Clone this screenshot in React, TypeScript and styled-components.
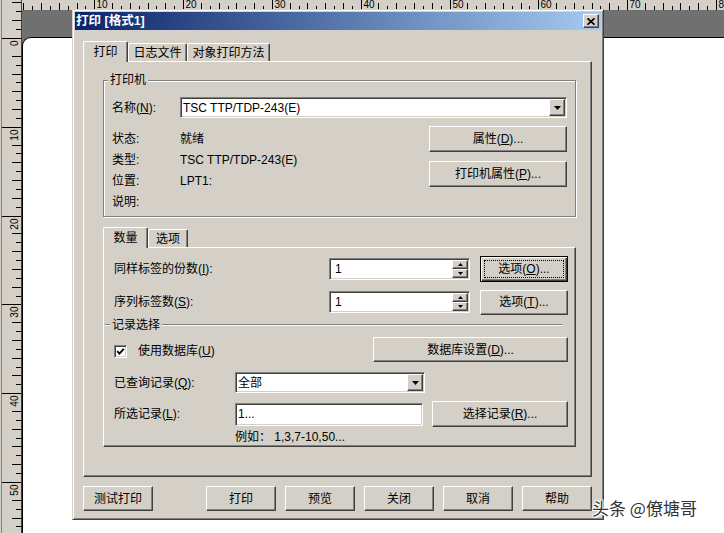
import React from "react";
import styled, { createGlobalStyle, css } from "styled-components";

const FACE = "#d4d0c8";
const HL = "#ffffff";
const SH = "#808080";
const DK = "#404040";
const FONT = `"Liberation Sans", "Noto Sans CJK SC", sans-serif`;
const UNIT = 8.88;

const GlobalStyle = createGlobalStyle`
  html, body { margin: 0; padding: 0; background: #fff; }
  body { font-family: ${FONT}; font-size: 12px; color: #000; }
  #root { width: 724px; height: 533px; overflow: hidden; }
  * { box-sizing: border-box; }
`;

const Workspace = styled.div`
  position: relative;
  width: 724px;
  height: 533px;
  display: grid;
  grid-template-columns: 22px 1fr;
  grid-template-rows: 10px 1fr;
  overflow: hidden;
  background: #fff;
`;

const RulerSvg = styled.svg`
  display: block;
  background: ${FACE};
  line { stroke: #000; stroke-width: 1; shape-rendering: crispEdges; }
  text { font-family: "Liberation Sans", sans-serif; font-size: 10px; fill: #000; }
`;

const VRulerSvg = styled(RulerSvg)`
  grid-row: 1 / 3;
  grid-column: 1;
`;

const HRulerSvg = styled(RulerSvg)`
  grid-row: 1;
  grid-column: 2;
`;

const Canvas = styled.div`
  grid-row: 2;
  grid-column: 2;
  background: #707070;
  padding-top: 27px;
  display: flex;
  flex-direction: column;
`;

const Page = styled.div`
  flex: 1;
  background: #fff;
  border-top: 1px solid #000;
  border-left: 1px solid #000;
  border-top-left-radius: 9px;
`;

function HRuler() {
  const items: React.ReactNode[] = [];
  for (let k = 0; k <= 82; k++) {
    const x = 5.5 + UNIT * k - 22;
    if (x < 0 || x > 702) continue;
    const px = Math.round(x) + 0.5;
    if (k % 10 === 0) {
      items.push(<line key={`l${k}`} x1={px} x2={px} y1={0} y2={10} />);
      items.push(
        <text key={`t${k}`} x={px + 2} y={7.5}>
          {k}
        </text>
      );
    } else if (k % 10 !== 1) {
      items.push(<line key={`l${k}`} x1={px} x2={px} y1={k % 2 === 0 ? 3 : 6} y2={10} />);
    }
  }
  return (
    <HRulerSvg width={702} height={10} viewBox="0 0 702 10">
      {items}
    </HRulerSvg>
  );
}

function VRuler() {
  const items: React.ReactNode[] = [];
  for (let k = -4; k <= 56; k++) {
    const y = 38 + UNIT * k;
    if (y < 0 || y > 533) continue;
    const py = Math.round(y) + 0.5;
    if (k % 10 === 0) {
      items.push(<line key={`l${k}`} x1={2} x2={21} y1={py} y2={py} />);
      items.push(
        <text key={`t${k}`} textAnchor="end" transform={`translate(17.5 ${py + 2}) rotate(-90)`}>
          {Math.abs(k)}
        </text>
      );
    } else if (((k % 10) + 10) % 10 !== 1) {
      items.push(<line key={`l${k}`} x1={Math.abs(k) % 2 === 0 ? 12 : 16} x2={21} y1={py} y2={py} />);
    }
  }
  return (
    <VRulerSvg width={22} height={533} viewBox="0 0 22 533">
      <line x1={1.5} x2={1.5} y1={0} y2={533} style={{ stroke: SH }} />
      <line x1={21.5} x2={21.5} y1={0} y2={533} style={{ stroke: DK }} />
      {items}
    </VRulerSvg>
  );
}

/* ---------- dialog ---------- */

const Dialog = styled.div`
  position: absolute;
  left: 72px;
  top: 9px;
  width: 532px;
  background: ${FACE};
  border: 1px solid;
  border-color: ${FACE} ${DK} ${DK} ${FACE};
  box-shadow: inset 1px 1px ${HL}, inset -1px -1px ${SH};
  padding: 2px;
  display: flex;
  flex-direction: column;
`;

const TitleBar = styled.div`
  height: 18px;
  display: flex;
  align-items: center;
  justify-content: space-between;
  padding: 0 2px 0 1px;
  background: linear-gradient(to right, #0a246a, #a6caf0);
`;

const Title = styled.span`
  color: #fff;
  font-weight: bold;
  font-size: 12.5px;
  line-height: 18px;
`;

const raised = css`
  background: ${FACE};
  border: 1px solid;
  border-color: ${HL} ${DK} ${DK} ${HL};
  box-shadow: inset -1px -1px ${SH};
`;

const CloseButton = styled.button`
  ${raised};
  width: 16px;
  height: 14px;
  padding: 0;
  display: flex;
  align-items: center;
  justify-content: center;
`;

const Body = styled.div`
  padding: 11px 9px 6px 8px;
  display: flex;
  flex-direction: column;
`;

const TabStrip = styled.div<{ $top?: number }>`
  display: flex;
  align-items: flex-end;
  height: 20px;
  margin-top: ${(p) => p.$top ?? 0}px;
  position: relative;
  z-index: 1;
`;

const Tab = styled.div<{ $active?: boolean; $w: number }>`
  width: ${(p) => p.$w}px;
  height: ${(p) => (p.$active ? 21 : 18)}px;
  margin-bottom: ${(p) => (p.$active ? -1 : 0)}px;
  padding-bottom: ${(p) => (p.$active ? 1 : 0)}px;
  background: ${FACE};
  border-top: 1px solid ${HL};
  border-left: 1px solid ${HL};
  border-right: 1px solid ${DK};
  box-shadow: inset -1px 0 ${SH};
  border-top-left-radius: 2px;
  border-top-right-radius: 2px;
  display: flex;
  align-items: center;
  justify-content: center;
  line-height: 14px;
  white-space: nowrap;
`;

const TabPanel = styled.div`
  background: ${FACE};
  border-top: 1px solid ${HL};
  border-left: 1px solid ${HL};
  border-right: 1px solid ${DK};
  border-bottom: 1px solid ${DK};
  box-shadow: inset -1px -1px ${SH};
  display: flex;
  flex-direction: column;
`;

const MainPanel = styled(TabPanel)`
  padding: 18px 15px 29px 19px;
`;

const SubPanel = styled(TabPanel)`
  padding: 8px 7px 2px 10px;
`;

const Group = styled.div`
  position: relative;
  border: 1px solid ${SH};
  box-shadow: inset 1px 1px ${HL}, 1px 1px ${HL};
  padding: 16px 8px 4px 8px;
`;

const Legend = styled.span`
  position: absolute;
  left: 4px;
  top: -8px;
  padding: 0 2px;
  background: ${FACE};
  line-height: 14px;
`;

const NameRow = styled.div`
  display: grid;
  grid-template-columns: 68px 1fr;
  align-items: center;
  height: 21px;
`;

const Label = styled.span`
  line-height: 14px;
  white-space: nowrap;
`;

const Field = styled.div<{ $w?: number; $h: number }>`
  width: ${(p) => (p.$w ? `${p.$w}px` : "auto")};
  height: ${(p) => p.$h}px;
  background: #fff;
  border: 1px solid;
  border-color: ${SH} ${HL} ${HL} ${SH};
  box-shadow: inset 1px 1px ${DK}, inset -1px -1px ${FACE};
  padding: 1px;
  display: flex;
  align-items: stretch;
`;

const FieldText = styled.span<{ $pad?: number }>`
  flex: 1;
  display: flex;
  align-items: center;
  padding-left: ${(p) => p.$pad ?? 2}px;
  line-height: 14px;
  white-space: nowrap;
  overflow: hidden;
`;

const DropButton = styled.div`
  ${raised};
  width: 16px;
  display: flex;
  align-items: center;
  justify-content: center;
`;

const SpinButtons = styled.div`
  width: 16px;
  display: flex;
  flex-direction: column;
`;

const SpinButton = styled.div`
  ${raised};
  flex: 1;
  display: flex;
  align-items: center;
  justify-content: center;
`;

const InfoSection = styled.div`
  display: grid;
  grid-template-columns: 1fr 138px;
  margin-top: 8px;
`;

const InfoList = styled.div`
  display: grid;
  grid-template-columns: 68px 1fr;
  grid-auto-rows: 21px;
  align-items: center;
  padding-top: 2px;
`;

const ButtonColumn = styled.div`
  display: flex;
  flex-direction: column;
  gap: 9px;
`;

const Button = styled.button<{ $w: number; $h: number; $focused?: boolean }>`
  ${raised};
  position: relative;
  width: ${(p) => p.$w}px;
  height: ${(p) => p.$h}px;
  padding: 0;
  font-family: ${FONT};
  font-size: 12px;
  line-height: 14px;
  color: #000;
  display: flex;
  align-items: center;
  justify-content: center;
  white-space: nowrap;
  ${(p) =>
    p.$focused &&
    css`
      border-color: #000;
      box-shadow: inset 1px 1px ${HL}, inset -1px -1px ${DK}, inset -2px -2px ${SH};
      &::after {
        content: "";
        position: absolute;
        inset: 3px;
        border: 1px dotted #000;
      }
    `}
`;

const FieldRow = styled.div<{ $top?: number }>`
  display: grid;
  grid-template-columns: 205px 141px 88px;
  column-gap: 10px;
  align-items: center;
  height: 26px;
  margin-top: ${(p) => p.$top ?? 0}px;
`;

const Separator = styled.div`
  display: flex;
  align-items: center;
  height: 14px;
  margin: 3px 6px 0 -9px;
`;

const EtchedLine = styled.div<{ $w?: number }>`
  ${(p) => (p.$w ? `width: ${p.$w}px;` : "flex: 1;")}
  height: 2px;
  border-top: 1px solid ${SH};
  border-bottom: 1px solid ${HL};
`;

const SeparatorLabel = styled.span`
  padding: 0 2px;
  line-height: 14px;
`;

const CheckRow = styled.div`
  display: grid;
  grid-template-columns: 1fr 195px;
  align-items: center;
  height: 25px;
  margin-top: 5px;
`;

const CheckLabel = styled.label`
  display: flex;
  align-items: center;
  gap: 11px;
  padding-top: 3px;
  line-height: 14px;
`;

const CheckBox = styled.span`
  width: 13px;
  height: 13px;
  background: #fff;
  border: 1px solid;
  border-color: ${SH} ${HL} ${HL} ${SH};
  box-shadow: inset 1px 1px ${DK}, inset -1px -1px ${FACE};
  display: flex;
  align-items: center;
  justify-content: center;
`;

const RecordRow = styled.div<{ $top: number; $h: number }>`
  display: grid;
  grid-template-columns: 112px 188px 136px;
  column-gap: 9px;
  align-items: center;
  height: ${(p) => p.$h}px;
  margin-top: ${(p) => p.$top}px;
`;

const ExampleText = styled.div`
  margin-top: 3px;
  padding-left: 121px;
  line-height: 14px;
  height: 14px;
`;

const Footer = styled.div`
  display: flex;
  gap: 9px;
  margin-top: 9px;
`;

const FooterSpacer = styled.div`
  flex: 1;
`;

const Watermark = styled.div`
  position: absolute;
  left: 592px;
  top: 498px;
  font-family: "Noto Sans CJK SC", sans-serif;
  font-size: 17px;
  line-height: 20px;
  color: #333;
  white-space: nowrap;
  text-shadow: 1px 1px 0 #fff, -1px -1px 0 #fff, 1px -1px 0 #fff, -1px 1px 0 #fff;
`;

const DownArrow = () => (
  <svg width="7" height="4" viewBox="0 0 7 4">
    <polygon points="0,0 7,0 3.5,4" fill="#000" />
  </svg>
);

const SmallArrow = ({ up }: { up?: boolean }) => (
  <svg width="5" height="3" viewBox="0 0 5 3">
    <polygon points={up ? "2.5,0 5,3 0,3" : "0,0 5,0 2.5,3"} fill="#000" />
  </svg>
);

function Spinner({ value }: { value: string }) {
  return (
    <Field $h={22}>
      <FieldText $pad={4}>{value}</FieldText>
      <SpinButtons>
        <SpinButton>
          <SmallArrow up />
        </SpinButton>
        <SpinButton>
          <SmallArrow />
        </SpinButton>
      </SpinButtons>
    </Field>
  );
}

export default function App() {
  return (
    <>
      <GlobalStyle />
      <Workspace>
        <VRuler />
        <HRuler />
        <Canvas>
          <Page />
        </Canvas>

        <Dialog>
          <TitleBar>
            <Title>打印 [格式1]</Title>
            <CloseButton aria-label="关闭">
              <svg width="8" height="7" viewBox="0 0 8 7">
                <path d="M0.5 0.3 L7.5 6.7 M7.5 0.3 L0.5 6.7" stroke="#000" strokeWidth="1.7" />
              </svg>
            </CloseButton>
          </TitleBar>

          <Body>
            <TabStrip>
              <Tab $active $w={45}>打印</Tab>
              <Tab $w={59}>日志文件</Tab>
              <Tab $w={83}>对象打印方法</Tab>
            </TabStrip>

            <MainPanel>
              <Group>
                <Legend>打印机</Legend>
                <NameRow>
                  <Label>
                    名称(<u>N</u>):
                  </Label>
                  <Field $h={21}>
                    <FieldText $pad={1}>TSC TTP/TDP-243(E)</FieldText>
                    <DropButton>
                      <DownArrow />
                    </DropButton>
                  </Field>
                </NameRow>
                <InfoSection>
                  <InfoList>
                    <Label>状态:</Label>
                    <Label>就绪</Label>
                    <Label>类型:</Label>
                    <Label>TSC TTP/TDP-243(E)</Label>
                    <Label>位置:</Label>
                    <Label>LPT1:</Label>
                    <Label>说明:</Label>
                    <Label />
                  </InfoList>
                  <ButtonColumn>
                    <Button $w={138} $h={26}>
                      属性(<u>D</u>)...
                    </Button>
                    <Button $w={138} $h={26}>
                      打印机属性(<u>P</u>)...
                    </Button>
                  </ButtonColumn>
                </InfoSection>
              </Group>

              <TabStrip $top={10}>
                <Tab $active $w={45}>数量</Tab>
                <Tab $w={40}>选项</Tab>
              </TabStrip>

              <SubPanel>
                <FieldRow>
                  <Label>
                    同样标签的份数(<u>I</u>):
                  </Label>
                  <Spinner value="1" />
                  <Button $w={88} $h={26} $focused>
                    选项(<u>O</u>)...
                  </Button>
                </FieldRow>
                <FieldRow $top={7}>
                  <Label>
                    序列标签数(<u>S</u>):
                  </Label>
                  <Spinner value="1" />
                  <Button $w={88} $h={25}>
                    选项(<u>T</u>)...
                  </Button>
                </FieldRow>

                <Separator>
                  <EtchedLine $w={5} />
                  <SeparatorLabel>记录选择</SeparatorLabel>
                  <EtchedLine />
                </Separator>

                <CheckRow>
                  <CheckLabel>
                    <CheckBox>
                      <svg width="9" height="9" viewBox="0 0 9 9">
                        <polyline points="1.2,4.2 3.4,6.6 7.8,1.8" fill="none" stroke="#000" strokeWidth="1.9" />
                      </svg>
                    </CheckBox>
                    <span>
                      使用数据库(<u>U</u>)
                    </span>
                  </CheckLabel>
                  <Button $w={195} $h={25}>
                    数据库设置(<u>D</u>)...
                  </Button>
                </CheckRow>

                <RecordRow $top={10} $h={21}>
                  <Label>
                    已查询记录(<u>Q</u>):
                  </Label>
                  <Field $h={21} $w={190}>
                    <FieldText $pad={1}>全部</FieldText>
                    <DropButton>
                      <DownArrow />
                    </DropButton>
                  </Field>
                </RecordRow>

                <RecordRow $top={8} $h={26}>
                  <Label>
                    所选记录(<u>L</u>):
                  </Label>
                  <Field $h={23}>
                    <FieldText $pad={1}>1...</FieldText>
                  </Field>
                  <Button $w={136} $h={26}>
                    选择记录(<u>R</u>)...
                  </Button>
                </RecordRow>

                <ExampleText>例如： 1,3,7-10,50...</ExampleText>
              </SubPanel>
            </MainPanel>

            <Footer>
              <Button $w={70} $h={25}>测试打印</Button>
              <FooterSpacer />
              <Button $w={70} $h={25}>打印</Button>
              <Button $w={70} $h={25}>预览</Button>
              <Button $w={70} $h={25}>关闭</Button>
              <Button $w={70} $h={25}>取消</Button>
              <Button $w={70} $h={25}>帮助</Button>
            </Footer>
          </Body>
        </Dialog>

        <Watermark>头条 @僚塘哥</Watermark>
      </Workspace>
    </>
  );
}
